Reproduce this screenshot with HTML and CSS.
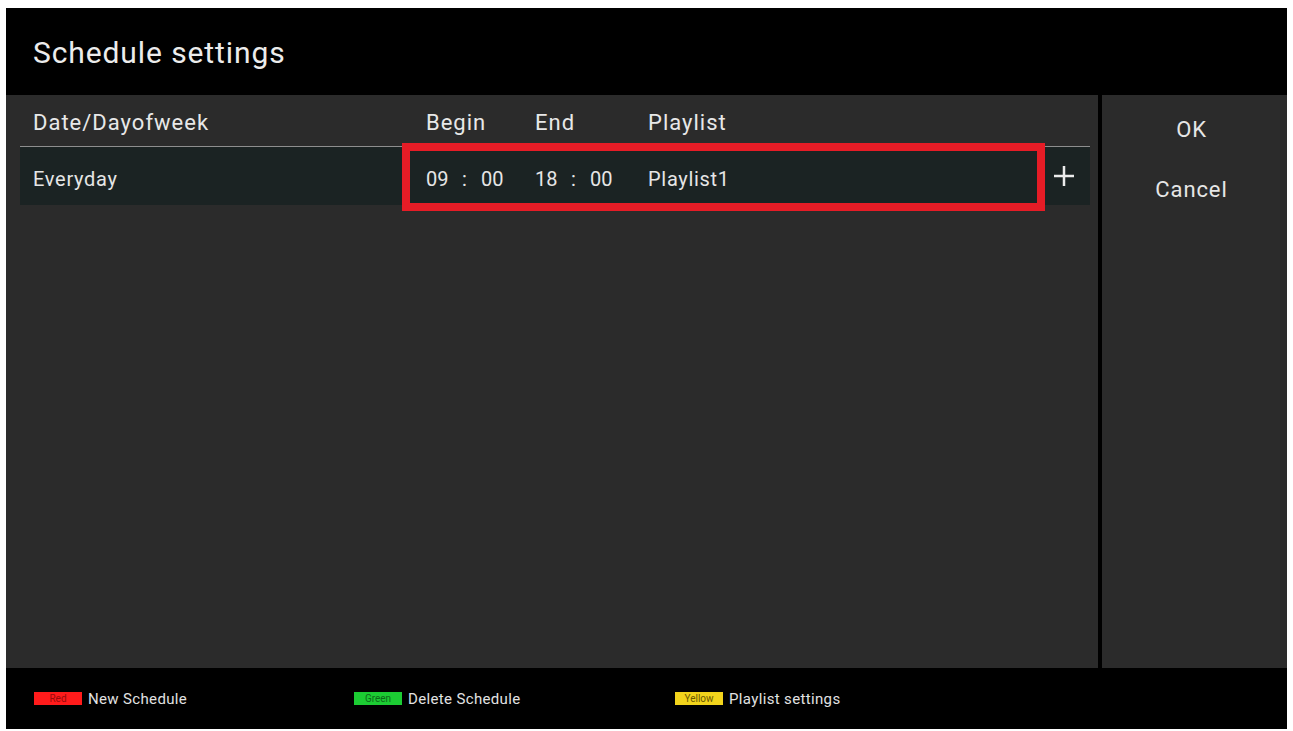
FILE: index.html
```html
<!DOCTYPE html>
<html lang="en">
<head>
<meta charset="utf-8">
<title>Schedule settings</title>
<link rel="stylesheet" href="styles.css">
</head>
<body>
<div class="screen">
  <header class="titlebar">
    <h1 class="title">Schedule settings</h1>
  </header>
  <main class="main">
    <section class="list">
      <div class="cols head">
        <span>Date/Dayofweek</span>
        <span>Begin</span>
        <span>End</span>
        <span>Playlist</span>
      </div>
      <div class="cols row selected">
        <span class="day">Everyday</span>
        <span class="time"><span class="num">09</span><span class="sep">:</span><span class="num">00</span></span>
        <span class="time"><span class="num">18</span><span class="sep">:</span><span class="num">00</span></span>
        <span class="pl">Playlist1</span>
        <svg class="plus" viewBox="0 0 22 22" width="22" height="22" aria-hidden="true">
          <path d="M11 1 V21 M1 11 H21" fill="none" stroke="#ececec" stroke-width="2.5"/>
        </svg>
        <div class="focus"></div>
      </div>
    </section>
    <div class="divider"></div>
    <aside class="side">
      <div class="side-btn">OK</div>
      <div class="side-btn">Cancel</div>
    </aside>
  </main>
  <footer class="footer">
    <div class="legend"><span class="key key-red">Red</span><span class="legend-text">New Schedule</span></div>
    <div class="legend"><span class="key key-green">Green</span><span class="legend-text">Delete Schedule</span></div>
    <div class="legend"><span class="key key-yellow">Yellow</span><span class="legend-text">Playlist settings</span></div>
  </footer>
</div>
</body>
</html>
```

FILE: styles.css
```css
* { box-sizing: border-box; }

html, body {
  margin: 0;
  padding: 0;
  background: #ffffff;
}

body {
  font-family: Roboto, "Noto Sans", "Liberation Sans", sans-serif;
  color: #e6e6e6;
}

.screen {
  margin: 8px 6px 2px 6px;
  width: 1281px;
  height: 721px;
  display: flex;
  flex-direction: column;
  background: #000;
}

.titlebar {
  height: 87px;
  background: #000;
  padding: 27px 0 0 27px;
}

.title {
  margin: 0;
  font-weight: 400;
  font-size: 30px;
  line-height: 36px;
  letter-spacing: 0.9px;
  color: #ececec;
}

.main {
  height: 573px;
  display: flex;
  background: #2b2b2b;
}

.list {
  width: 1092px;
  padding: 0 8px 0 14px;
}

.cols {
  display: grid;
  grid-template-columns: 393px 109px 113px 1fr auto;
  padding-left: 13px;
}

.head {
  height: 52px;
  padding-top: 15px;
  font-size: 22px;
  line-height: 26px;
  letter-spacing: 1px;
  border-bottom: 1px solid #8e8e8e;
  color: #e8e8e8;
}

.row {
  position: relative;
  height: 58px;
  align-items: center;
  padding-top: 5px;
  font-size: 20px;
  line-height: 24px;
  letter-spacing: 0.7px;
}

.selected {
  background: #1b2323;
}

.time {
  display: flex;
  letter-spacing: 0;
}

.num { width: 22px; }

.sep {
  width: 33px;
  text-align: center;
}

.plus {
  display: block;
  margin-right: 15px;
  margin-top: -6px;
}

.focus {
  position: absolute;
  left: 382px;
  top: -4px;
  width: 643px;
  height: 68px;
  border: 8px solid #e61c26;
  pointer-events: none;
}

.divider {
  width: 4px;
  background: #000;
}

.side {
  width: 185px;
  padding: 20px 6px 0 0;
  display: flex;
  flex-direction: column;
  align-items: center;
  gap: 30px;
}

.side-btn {
  font-size: 22px;
  line-height: 30px;
  letter-spacing: 0.9px;
  color: #e6e6e6;
}

.footer {
  height: 61px;
  background: #000;
  display: grid;
  grid-template-columns: 320px 321px 1fr;
  align-items: center;
  padding-left: 28px;
}

.legend {
  display: flex;
  align-items: center;
  gap: 6px;
}

.key {
  width: 48px;
  height: 13px;
  font-size: 10px;
  line-height: 13px;
  text-align: center;
}

.key-red { background: #ff1b1b; color: #9a0a0a; }
.key-green { background: #1ccc33; color: #0c6a18; }
.key-yellow { background: #f2d41c; color: #6a5800; }

.legend-text {
  font-size: 15px;
  line-height: 18px;
  letter-spacing: 0.35px;
  color: #e2e2e2;
}
```
